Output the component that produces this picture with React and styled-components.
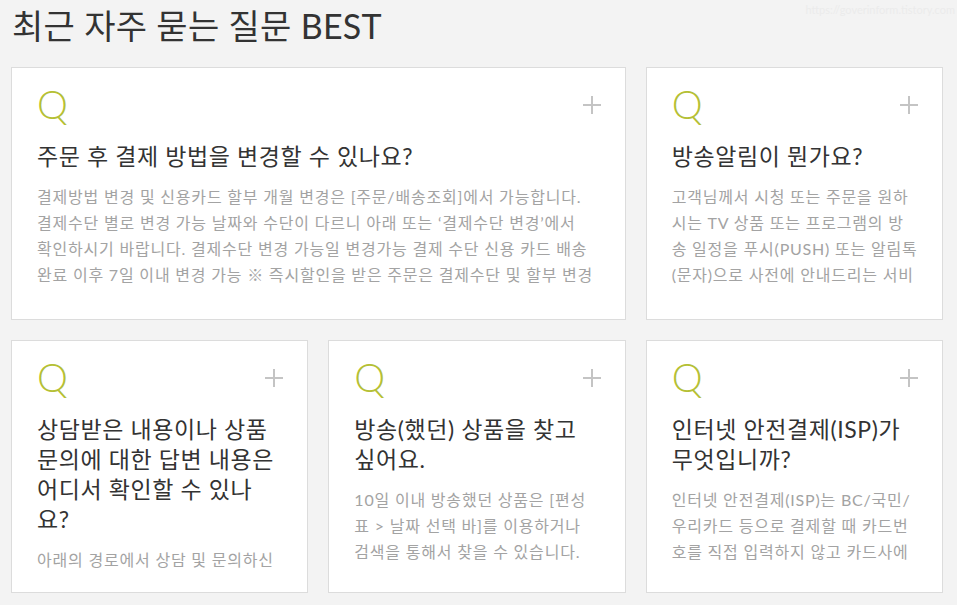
import React from 'react';
import styled, { createGlobalStyle } from 'styled-components';

const faqs = [
  {
    title: ['주문 후 결제 방법을 변경할 수 있나요?'],
    body: [
      '결제방법 변경 및 신용카드 할부 개월 변경은 [주문/배송조회]에서 가능합니다.',
      '결제수단 별로 변경 가능 날짜와 수단이 다르니 아래 또는 ‘결제수단 변경’에서',
      '확인하시기 바랍니다. 결제수단 변경 가능일 변경가능 결제 수단 신용 카드 배송',
      '완료 이후 7일 이내 변경 가능 ※ 즉시할인을 받은 주문은 결제수단 및 할부 변경',
    ],
    wide: true,
  },
  {
    title: ['방송알림이 뭔가요?'],
    body: [
      '고객님께서 시청 또는 주문을 원하',
      '시는 TV 상품 또는 프로그램의 방',
      '송 일정을 푸시(PUSH) 또는 알림톡',
      '(문자)으로 사전에 안내드리는 서비',
    ],
  },
  {
    title: ['상담받은 내용이나 상품', '문의에 대한 답변 내용은', '어디서 확인할 수 있나', '요?'],
    body: ['아래의 경로에서 상담 및 문의하신'],
  },
  {
    title: ['방송(했던) 상품을 찾고', '싶어요.'],
    body: [
      '10일 이내 방송했던 상품은 [편성',
      '표 > 날짜 선택 바]를 이용하거나',
      '검색을 통해서 찾을 수 있습니다.',
    ],
  },
  {
    title: ['인터넷 안전결제(ISP)가', '무엇입니까?'],
    body: [
      '인터넷 안전결제(ISP)는 BC/국민/',
      '우리카드 등으로 결제할 때 카드번',
      '호를 직접 입력하지 않고 카드사에',
    ],
  },
];

const App = () => {
  return (
    <>
      <GlobalStyle />
      <Page>
        <Watermark>https://goverinform.tistory.com</Watermark>
        <Heading>최근 자주 묻는 질문 BEST</Heading>
        <Grid>
          {faqs.map((faq, i) => (
            <Card key={i} $wide={faq.wide}>
              <CardTop>
                <QMark>Q</QMark>
                <PlusIcon />
              </CardTop>
              <Question>
                {faq.title.map((line, j) => (
                  <Line key={j}>{line}</Line>
                ))}
              </Question>
              <Answer>
                {faq.body.map((line, j) => (
                  <Line key={j}>{line}</Line>
                ))}
              </Answer>
            </Card>
          ))}
        </Grid>
      </Page>
    </>
  );
};

const PlusIcon = () => (
  <PlusSvg viewBox="0 0 18 18" width="18" height="18">
    <path d="M9 0v18M0 9h18" stroke="#c4c4c4" strokeWidth="2" fill="none" />
  </PlusSvg>
);

const GlobalStyle = createGlobalStyle`
body {
  margin: 0;
  background: #f3f3f3;
  font-family: Lato, "Noto Sans CJK KR", sans-serif;
}
`;

const Page = styled.div`
position: relative;
padding: 6px 14px 0 11px;
width: 932px;
`;

const Watermark = styled.div`
position: absolute;
top: 3px;
right: 2px;
font-size: 11px;
color: #ebebeb;
`;

const Heading = styled.h1`
margin: 0 0 0 1px;
font-size: 34px;
font-weight: 400;
line-height: 40px;
color: #333;
letter-spacing: 0.3px;
`;

const Grid = styled.div`
display: grid;
grid-template-columns: repeat(3, 1fr);
grid-auto-rows: 253px;
column-gap: 20px;
row-gap: 20px;
margin-top: 21px;
`;

const Card = styled.div`
grid-column: ${(p) => (p.$wide ? 'span 2' : 'span 1')};
display: flex;
flex-direction: column;
background: #fff;
border: 1px solid #dcdcdc;
padding: 18px 24px 24px 25px;
overflow: hidden;
`;

const CardTop = styled.div`
display: flex;
justify-content: space-between;
align-items: flex-start;
height: 36px;
`;

const QMark = styled.span`
font-family: Lato, sans-serif;
font-size: 39px;
font-weight: 300;
line-height: 36px;
color: #b5c035;
`;

const PlusSvg = styled.svg`
display: block;
margin-top: 10px;
`;

const Question = styled.div`
margin-top: 19px;
font-size: 23px;
line-height: 30px;
letter-spacing: 0.6px;
color: #333;
`;

const Answer = styled.div`
margin-top: 13px;
font-size: 16px;
line-height: 26px;
letter-spacing: 0.8px;
color: #a3a3a3;
`;

const Line = styled.span`
display: block;
white-space: nowrap;
`;

export default App;
